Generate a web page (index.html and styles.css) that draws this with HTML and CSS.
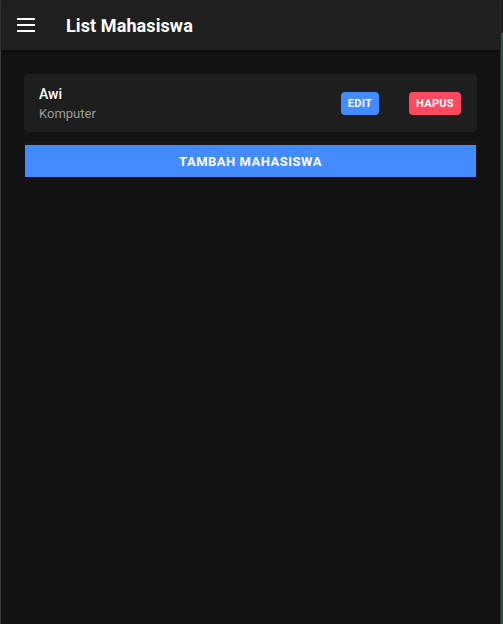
FILE: index.html
```html
<!DOCTYPE html>
<html>
<head>
<meta charset="utf-8">
<link rel="stylesheet" href="styles.css">
</head>
<body>
<div class="frame">
  <div class="app">
    <header class="toolbar">
      <span class="menu-btn">
        <svg width="18" height="14" viewBox="0 0 18 14"><rect x="0" y="0" width="18" height="2" fill="#fff"/><rect x="0" y="6" width="18" height="2" fill="#fff"/><rect x="0" y="12" width="18" height="2" fill="#fff"/></svg>
      </span>
      <h1 class="title">List Mahasiswa</h1>
    </header>
    <main class="content">
      <div class="card">
        <div class="info">
          <div class="name">Awi</div>
          <div class="major">Komputer</div>
        </div>
        <button class="btn btn-edit">EDIT</button>
        <button class="btn btn-delete">HAPUS</button>
      </div>
      <div class="add-wrap">
        <button class="btn-add">TAMBAH MAHASISWA</button>
      </div>
    </main>
  </div>
  <div class="side-strip"></div>
</div>
</body>
</html>
```

FILE: styles.css
```css
* { box-sizing: border-box; }
html, body { margin: 0; padding: 0; height: 100%; }
body {
  background: #121212;
  font-family: Roboto, "Noto Sans", sans-serif;
  color: #fff;
}
.frame {
  display: flex;
  height: 624px;
}
.app {
  width: 501px;
  border-left: 1px solid #3a3a3a;
  border-right: 1px solid #2c2c2c;
  display: flex;
  flex-direction: column;
  background: #121212;
}
.side-strip {
  width: 2px;
  background: linear-gradient(#1e1e1e 0 33px, #1f5a48 33px 100%);
}
.toolbar {
  height: 50px;
  background: #1f1f1f;
  display: flex;
  align-items: center;
  padding-left: 16px;
  box-shadow: 0 1px 2px rgba(0,0,0,0.4);
}
.menu-btn {
  display: flex;
  width: 18px;
  height: 14px;
  margin-top: 0px;
}
.title {
  margin: 0 0 0 31px;
  font-size: 18px;
  font-weight: 700;
  letter-spacing: 0.1px;
  color: #fff;
}
.content {
  padding: 24px 23px 0 23px;
}
.card {
  background: #1e1e1e;
  border-radius: 4px;
  height: 58px;
  display: flex;
  align-items: center;
  padding: 0 16px 0 15px;
}
.info { flex: 1; }
.name {
  font-size: 14px;
  line-height: 18px;
  color: #fff;
  font-weight: 500;
}
.major {
  font-size: 13px;
  line-height: 17px;
  color: #9a9a9a;
  margin-top: 2px;
}
.btn {
  border: none;
  border-radius: 4px;
  height: 23px;
  color: #fff;
  font-family: Roboto, sans-serif;
  font-size: 11px;
  font-weight: 700;
  padding: 0;
  letter-spacing: 0.3px;
}
.btn-edit {
  background: #428cff;
  width: 38px;
  margin-right: 30px;
}
.btn-delete {
  background: #ff4961;
  width: 52px;
}
.add-wrap {
  margin-top: 9px;
  padding: 4px 1px;
  background: #171717;
  border-radius: 2px;
}
.btn-add {
  display: block;
  width: 100%;
  height: 32px;
  border: none;
  background: #428cff;
  color: #fff;
  font-family: Roboto, sans-serif;
  font-size: 13px;
  font-weight: 700;
  letter-spacing: 0.5px;
  box-shadow: 0 2px 3px rgba(0,0,0,0.5);
}
```
